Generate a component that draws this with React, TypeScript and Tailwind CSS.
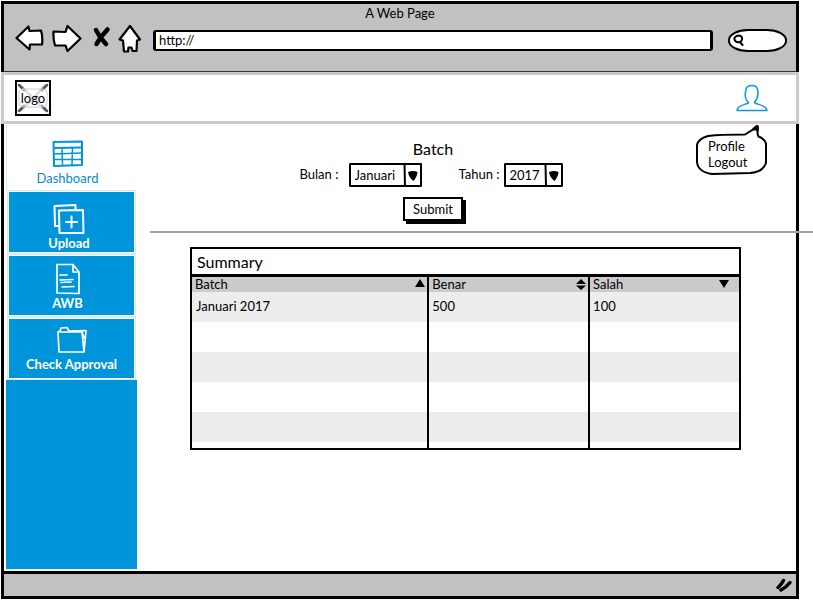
import type { ReactNode } from "react";

const stroke = {
  fill: "none",
  stroke: "currentColor",
  strokeLinecap: "round" as const,
  strokeLinejoin: "round" as const,
};

function BrowserBar() {
  return (
    <div className="flex h-[68px] flex-col border-b border-[#333] bg-[#c1c1c1]">
      <div className="text-center text-[13px] leading-[18px]">A Web Page</div>
      <div className="flex items-center pt-[2px] pr-[9px] pl-[11px]">
        <button aria-label="Back" className="h-8 w-[29px]">
          <svg width="29" height="32" viewBox="0 0 29 32" {...stroke} strokeWidth="2.2">
            <path fill="#fff" d="M1.5 14 13.5 2.5 14.5 7 26 6.5Q28 13 27 20.5L15 20.5 14.5 25.500Z" />
          </svg>
        </button>
        <button aria-label="Forward" className="ml-2 h-8 w-[30px]">
          <svg width="30" height="32" viewBox="0 0 30 32" {...stroke} strokeWidth="2.2">
            <path fill="#fff" d="M1.5 7.5 13.5 8 15.5 2 28.5 14.5 15.5 27 13.500 21.500 3 21.500Q1 15 1.5 7.5Z" />
          </svg>
        </button>
        <button aria-label="Stop" className="ml-[10px] h-8 w-[19px]">
          <svg width="19" height="32" viewBox="0 0 19 32" {...stroke} strokeWidth="4.5">
            <path d="M4 6 8 13 14 20M15.500 5.500 9 13 4.500 20" />
          </svg>
        </button>
        <button aria-label="Home" className="ml-[7px] h-8 w-6">
          <svg width="24" height="32" viewBox="0 0 24 32" {...stroke} strokeWidth="2.2">
            <path fill="#fff" d="M12 2 22 15.500 19 16.500 18.500 27 14.500 27 13.500 23.500 10.500 23.500 10 27.500 6 27.500 5 16.500 1.500 15.500Z" />
          </svg>
        </button>
        <input
          aria-label="Address"
          defaultValue="http://"
          className="ml-[11px] h-[21px] min-w-0 flex-1 rounded-[3px] border-x-[3px] border-y-[2px] border-black bg-white px-[3px] text-[13px] outline-none"
        />
        <label className="ml-[15px] flex h-[23px] w-[59px] items-center border-2 border-black bg-white pl-[3px] [border-radius:20px/11px]">
          <svg className="shrink-0" width="11" height="12" viewBox="0 0 11 12" {...stroke} strokeWidth="2">
            <path d="M5.500 1.500C2 2 1 4 1.500 5.500 2.500 9 8 9 9 5.500 9.500 3 8 1.500 5.500 1.500M7 8 9.500 11" />
          </svg>
          <input aria-label="Search" className="w-9 min-w-0 bg-transparent text-[12px] outline-none" />
        </label>
      </div>
    </div>
  );
}

function Header() {
  return (
    <header className="-mx-[3px] flex h-[52px] items-center justify-between border-[3px] border-[#cbcbcb] bg-white pr-7 pl-[11px]">
      <div className="relative flex size-9 items-center justify-center border-2 border-black bg-white">
        <svg className="absolute inset-0" width="32" height="32" viewBox="0 0 32 32" {...stroke}>
          <path stroke="#ccc" strokeWidth="3" d="M4 4 28 28M28 4 4 28" />
          <path stroke="#555" strokeWidth="2.500" d="M2 3 7 8M30 3 25 8M2 29 7 24M30 29 25 24" />
          <rect x="2" y="7" width="28" height="18" rx="4" fill="#fff" fillOpacity=".4" stroke="#ccc" />
        </svg>
        <span className="relative text-[13px] leading-4">logo</span>
      </div>
      <div className="relative">
        <button aria-label="Profile menu" className="block text-[#0c97dc]">
          <svg width="32" height="28" viewBox="0 0 32 28" {...stroke} strokeWidth="1.500">
            <path d="M12.500 18.500C8 14 9 8 10.500 4 12 .5 20 .5 21 4 23 9 22 14 18.500 18.500 20 21 30 20 31 26.500H1C2 20 11 21 12.500 18.500Z" />
          </svg>
        </button>
        <nav className="absolute top-[41px] -left-10 z-10 h-[50px] w-[72px] pt-[13px] pl-3 text-[13px] leading-4">
          <svg className="absolute inset-0" width="72" height="50" viewBox="0 0 72 50" {...stroke} strokeWidth="2">
            <path fill="#fff" d="M12 11C24 9.500 34 9.500 49 9.500Q57 5 61.500 1C63 4 60 8 62.500 11.500Q69 14 70 19L70 38Q67 47 54 48L16 49Q2 47 1 37L1 20Q2 14 12 11Z" />
            <path strokeWidth="3" d="M58 4 61 1.500 61 5" />
          </svg>
          <a href="#profile" className="relative block">Profile</a>
          <a href="#logout" className="relative block">Logout</a>
        </nav>
      </div>
    </header>
  );
}

function NavItem({ label, className, children }: { label: string; className: string; children: ReactNode }) {
  return (
    <a
      href="#"
      className={`mx-[3px] flex flex-col items-center justify-end bg-[#0095da] text-[13px] leading-4 font-bold text-white outline-1 outline-offset-1 outline-[#d3ecf9] ${className}`}
    >
      {children}
      {label}
    </a>
  );
}

function Sidebar() {
  return (
    <nav className="ml-[2px] flex w-[131px] shrink-0 flex-col">
      <a
        href="#"
        className="flex h-[67px] flex-col items-center justify-end border-l border-[#d3ecf9] pr-[9px] pb-[3px] text-[13px] leading-5 text-[#0c87cc]"
      >
        <svg className="mb-px" width="32" height="28" viewBox="0 0 32 28" {...stroke} stroke="#0095da" strokeWidth="1.500">
          <path strokeWidth="2" d="M1.500 3 30 2.500 30 26 2 27Z" />
          <path strokeWidth="2" d="M2 9 30 8.500" />
          <path d="M2 15 30 14M2 20.500 30 20.500M10 9 10.500 26M20.500 9 20 26" />
        </svg>
        Dashboard
      </a>
      <div className="grid grid-rows-[60px_59px_59px] gap-1 pt-px pb-[2px]">
        <NavItem label="Upload" className="pr-[5px] pb-px">
          <svg width="32" height="31" viewBox="0 0 32 31" {...stroke} strokeWidth="2">
            <path d="M5.500 22 2 22 1.500 2 22.500 1 22.500 5" />
            <path d="M6 6.500 30 6 30.500 29 6.500 29ZM18.500 12.500V23.500M13 18H24" />
          </svg>
        </NavItem>
        <NavItem label="AWB" className="pr-2 pb-1">
          <svg width="26" height="32" viewBox="0 0 26 32" {...stroke} strokeWidth="1.700">
            <path d="M2 1.500 18 1.500 24 9 24 30.500 2 30ZM18 2 18 9 24 9M5 12H12M5 17 18 16.500M6 19.500 16 19M7 24 19 23.500" />
          </svg>
        </NavItem>
        <NavItem label="Check Approval" className="pb-[6px]">
          <svg className="mb-[2px]" width="32" height="28" viewBox="0 0 32 28" {...stroke} strokeWidth="1.700">
            <path d="M2 6 4 5 5 2 11 1.500 13 5 30 4.500 28 26 3 26ZM2 6 26 6 28 26M26 6 28 12" />
          </svg>
        </NavItem>
      </div>
      <div className="mb-[2px] flex-1 bg-[#0095da]" />
    </nav>
  );
}

function SketchSelect({ id, options, className }: { id: string; options: string[]; className: string }) {
  return (
    <div className={`relative h-6 ${className}`}>
      <select
        id={id}
        className="size-full appearance-none rounded-[1px] border-2 border-black bg-white pl-1 text-[13px] leading-4 outline-none"
      >
        {options.map((o) => (
          <option key={o}>{o}</option>
        ))}
      </select>
      <svg className="pointer-events-none absolute top-0 right-0" width="19" height="24" viewBox="0 0 19 24">
        <path d="M1.500 1 2 23" stroke="#000" strokeWidth="2" />
        <path d="M5 9Q10 7 14.500 9 14.500 13 10.500 18 6 15 5 9Z" />
      </svg>
    </div>
  );
}

function BatchForm() {
  return (
    <form className="flex flex-col items-center pt-[15px] pr-20" onSubmit={(e) => e.preventDefault()}>
      <h1 className="text-[16px] leading-5">Batch</h1>
      <div className="flex items-center pt-1 pr-1 text-[13px]">
        <label htmlFor="bulan" className="w-[49px]">Bulan :</label>
        <SketchSelect id="bulan" options={["Januari", "Februari", "Maret"]} className="w-[73px]" />
        <label htmlFor="tahun" className="ml-[37px] w-[45px]">Tahun :</label>
        <SketchSelect id="tahun" options={["2017", "2016"]} className="w-[59px]" />
      </div>
      <button className="mt-[10px] h-6 w-[60px] border-2 border-black bg-white text-[13px] leading-4 shadow-[3px_3px_0_#000]">
        Submit
      </button>
    </form>
  );
}

const columns = [
  { name: "Batch", icon: "M5 0 10 8H0Z" },
  { name: "Benar", icon: "M5 0 10 5H0ZM0 6.500H10L5 11Z" },
  { name: "Salah", icon: "M0 1H10L5 9Z" },
];

const rows = [["Januari 2017", "500", "100"], [], [], [], []];

function Summary() {
  return (
    <section className="mt-[14px] mr-[55px] ml-10">
      <h2 className="h-[27px] border-2 border-b-0 border-black pl-[5px] text-[16px] leading-[25px]">Summary</h2>
      <div className="border-2 border-t-[3px] border-black">
        <table className="w-full table-fixed border-collapse text-left text-[13px]">
          <colgroup>
            <col className="w-[43.2%]" />
            <col className="w-[29.4%]" />
            <col />
          </colgroup>
          <thead>
            <tr className="h-[15px] bg-[#cbcbcb]">
              {columns.map((c) => (
                <th key={c.name} scope="col" className="border-l-2 border-black p-0 font-normal first:border-l-0">
                  <div className="flex h-[15px] items-center justify-between pr-[2px] pl-[3px] leading-[15px]">
                    {c.name}
                    <svg className={c.name === "Salah" ? "mr-2" : "mr-0"} width="10" height="11" viewBox="0 0 10 11">
                      <path d={c.icon} />
                    </svg>
                  </div>
                </th>
              ))}
            </tr>
          </thead>
          <tbody>
            {rows.map((r, i) => (
              <tr key={i} className="h-[30px] odd:bg-[#ededed]">
                {columns.map((c, j) => (
                  <td key={c.name} className="border-l-2 border-black p-0 pl-[3px] first:border-l-0 first:pl-1">
                    {r[j]}
                  </td>
                ))}
              </tr>
            ))}
            <tr className="h-[6px] bg-white">
              {columns.map((c) => (
                <td key={c.name} className="border-l-2 border-black p-0 first:border-l-0" />
              ))}
            </tr>
          </tbody>
        </table>
      </div>
    </section>
  );
}

export default function App() {
  return (
    <div className="flex min-h-screen bg-white py-px pr-[14px] pl-px font-[Lato,sans-serif] text-black">
      <div className="flex min-w-0 flex-1 flex-col border-[3px] border-black">
        <BrowserBar />
        <Header />
        <div className="flex flex-1">
          <Sidebar />
          <main className="min-w-0 flex-1 pl-[13px]">
            <BatchForm />
            <hr className="mt-[10px] -mr-[17px] border-t-2 border-[#a5a5a5]" />
            <Summary />
          </main>
        </div>
        <footer className="flex h-[25px] items-center justify-end border-t-[3px] border-black bg-[#c1c1c1] pr-1">
          <svg width="16" height="14" viewBox="0 0 16 14" {...stroke} strokeWidth="3.5">
            <path d="M2 9.500Q5 7 7.500 2.500M5 12Q10 9.500 14 4.500" />
          </svg>
        </footer>
      </div>
    </div>
  );
}
